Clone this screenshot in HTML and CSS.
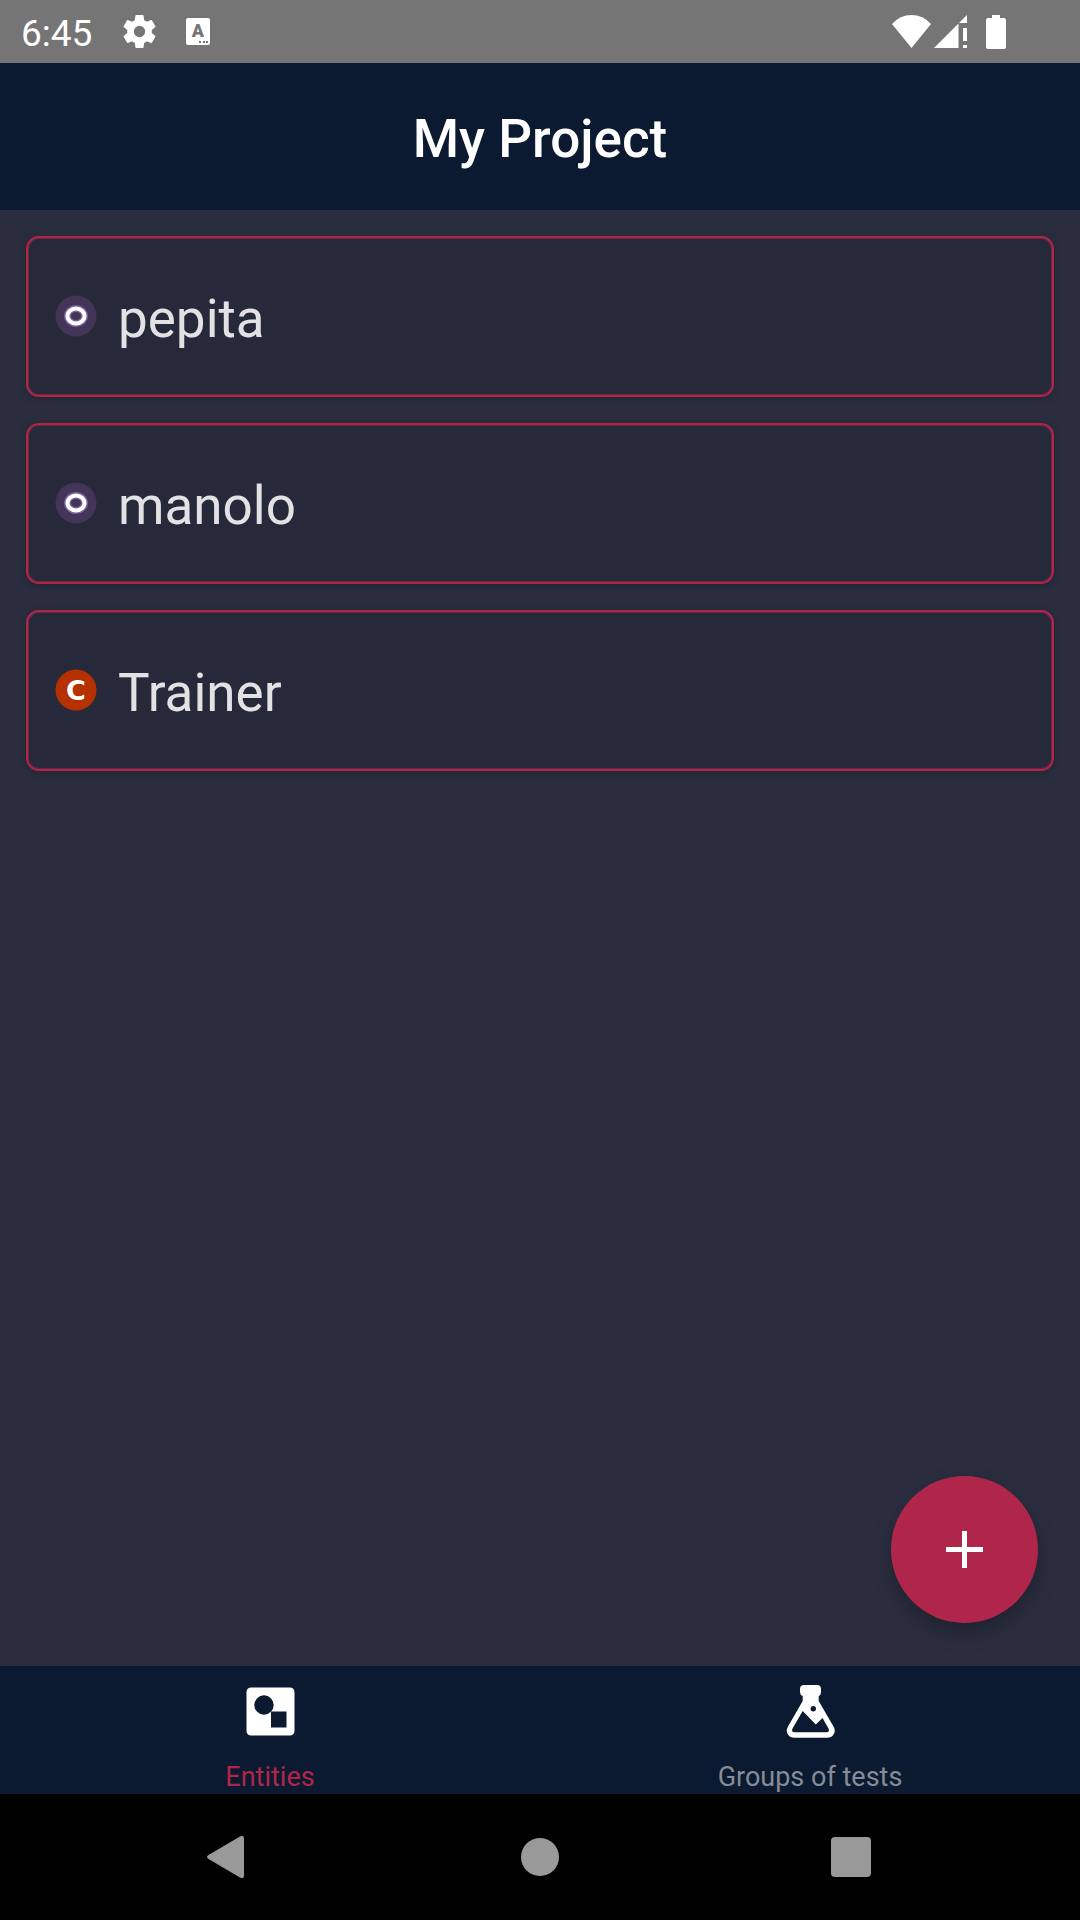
FILE: index.html
```html
<!DOCTYPE html>
<html lang="en">
<head>
  <meta charset="utf-8">
  <meta name="viewport" content="width=device-width, initial-scale=1">
  <title>My Project</title>
  <link rel="stylesheet" href="styles.css">
</head>
<body>
  <div class="status-bar">
    <span class="clock">6:45</span>
    <div class="notifications">
      <svg class="gear" viewBox="0 0 24 24" aria-hidden="true"><path d="M19.14 12.94c.04-.3.06-.61.06-.94 0-.32-.02-.64-.07-.94l2.03-1.58c.18-.14.23-.41.12-.61l-1.92-3.32c-.12-.22-.37-.29-.59-.22l-2.39.96c-.5-.38-1.03-.7-1.62-.94l-.36-2.54c-.04-.24-.24-.41-.48-.41h-3.84c-.24 0-.43.17-.47.41l-.36 2.54c-.59.24-1.13.57-1.62.94l-2.39-.96c-.22-.08-.47 0-.59.22L2.74 8.87c-.12.21-.08.47.12.61l2.03 1.58c-.05.3-.09.63-.09.94s.02.64.07.94l-2.03 1.58c-.18.14-.23.41-.12.61l1.92 3.32c.12.22.37.29.59.22l2.39-.96c.5.38 1.03.7 1.62.94l.36 2.54c.05.24.24.41.48.41h3.84c.24 0 .44-.17.47-.41l.36-2.54c.59-.24 1.13-.56 1.62-.94l2.39.96c.22.08.47 0 .59-.22l1.92-3.32c.12-.22.07-.47-.12-.61l-2.01-1.58zM12 15.3a3.3 3.3 0 1 1 0-6.6 3.3 3.3 0 0 1 0 6.6z"/></svg>
      <svg class="keyboard" viewBox="0 0 24 27" aria-hidden="true">
        <rect width="24" height="27" rx="2"/>
        <text class="cutout" x="12" y="19" text-anchor="middle">A</text>
        <g class="cutout"><rect x="13" y="23" width="2" height="2"/><rect x="17" y="23" width="2" height="2"/><rect x="20" y="23" width="2" height="2"/></g>
      </svg>
    </div>
    <div class="system-icons">
      <svg class="wifi" viewBox="0 0 39 33" aria-hidden="true"><path d="M19.500 33 0 9Q8 0 19.500 0T39 9z"/></svg>
      <svg class="signal" viewBox="0 0 33 33" aria-hidden="true"><path d="M0 33 24.500 8.500V33zM25 8l8-8v8zM29 13h4v13h-4zM29 30h4v3h-4z"/></svg>
      <svg class="battery" viewBox="0 0 20 34" aria-hidden="true"><path d="M6 0h8v3h4q2 0 2 2v27q0 2-2 2H2q-2 0-2-2V5q0-2 2-2h4z"/></svg>
    </div>
  </div>

  <header class="app-header"><h1>My Project</h1></header>

  <main class="content">
    <ul class="entity-list">
      <li class="entity">
        <svg class="badge badge-object" viewBox="0 0 42 42" aria-hidden="true"><circle cx="21" cy="21" r="20.500"/><ellipse class="glow" cx="21" cy="21" rx="8.500" ry="7.500"/><ellipse class="ring" cx="21" cy="21" rx="8.500" ry="7.500"/></svg>
        <span class="entity-name">pepita</span>
      </li>
      <li class="entity">
        <svg class="badge badge-object" viewBox="0 0 42 42" aria-hidden="true"><circle cx="21" cy="21" r="20.500"/><ellipse class="glow" cx="21" cy="21" rx="8.500" ry="7.500"/><ellipse class="ring" cx="21" cy="21" rx="8.500" ry="7.500"/></svg>
        <span class="entity-name">manolo</span>
      </li>
      <li class="entity">
        <svg class="badge badge-class" viewBox="0 0 42 42" aria-hidden="true"><circle cx="21" cy="21" r="20.500"/><text x="21" y="31" text-anchor="middle">C</text></svg>
        <span class="entity-name">Trainer</span>
      </li>
    </ul>
    <button class="fab" type="button" aria-label="Add entity">
      <svg viewBox="0 0 37 37" aria-hidden="true"><path d="M16 0h5v16h16v5H21v16h-5V21H0v-5h16z"/></svg>
    </button>
  </main>

  <nav class="tabs">
    <a class="tab tab-active" href="#entities">
      <svg viewBox="0 0 64 64" aria-hidden="true"><path fill-rule="evenodd" d="M13.500 8.500h38q5 0 5 5v38q0 5-5 5h-38q-5 0-5-5v-38q0-5 5-5zM26 16.300a9.700 9.700 0 1 0 0 19.400a9.700 9.700 0 1 0 0-19.400z"/><path class="hole" d="M33 32.500h15.500v16H33z"/></svg>
      <span>Entities</span>
    </a>
    <a class="tab" href="#tests">
      <svg viewBox="0 0 64 64" aria-hidden="true"><path fill-rule="evenodd" d="M26 6h13q4 0 4 4v3q0 3-2.300 4v5L55.500 47.500Q58 52 55.500 55.500 53.500 58.700 49 58.700H16.500Q12 58.700 10 55.500 7.500 52 10 47.500L24.700 22v-5Q22 16 22 13v-3q0-4 4-4zM24.700 32 14.500 49.500Q13 53.300 16.500 53.300h32Q52 53.300 50.500 49.500L44.500 39l-6.700 6.500zM35.300 27a2.700 2.700 0 1 0 0 5.400a2.700 2.700 0 1 0 0-5.400z"/></svg>
      <span>Groups of tests</span>
    </a>
  </nav>

  <div class="system-nav">
    <button type="button" aria-label="Back"><svg viewBox="0 0 64 64" aria-hidden="true"><path d="M11.500 30 43 11.500q4-2 4 2v37q0 4-4 2L11.500 34q-3-2 0-4z"/></svg></button>
    <button type="button" aria-label="Home"><svg viewBox="0 0 64 64" aria-hidden="true"><circle cx="32" cy="32" r="19"/></svg></button>
    <button type="button" aria-label="Recent apps"><svg viewBox="0 0 64 64" aria-hidden="true"><rect x="12" y="12" width="40" height="40" rx="4"/></svg></button>
  </div>
</body>
</html>
```
FILE: styles.css
```css
:root {
  --navy: #0b1a30;
  --crimson: #b0264b;
  --page: #2a2d3e;
  --card: #262939;
  --status: #757575;
}

* {
  box-sizing: border-box;
}

body {
  margin: 0;
  min-height: 100vh;
  display: flex;
  flex-direction: column;
  background: var(--page);
  color: #fff;
  font-family: Roboto, sans-serif;
}

svg {
  display: block;
  flex: none;
  fill: currentColor;
}

button {
  border: 0;
  padding: 0;
  cursor: pointer;
}

.status-bar {
  display: flex;
  align-items: center;
  height: 63px;
  padding: 0 74px 0 21px;
  background: var(--status);
}

.clock {
  font-size: 37px;
  line-height: 44px;
  padding-top: 4px;
}

.notifications {
  display: flex;
  align-items: center;
  gap: 26px;
  margin-left: 27px;
}

.gear {
  width: 41px;
  height: 41px;
}

.keyboard {
  width: 24px;
  height: 27px;
}

.keyboard text {
  font-size: 18px;
  font-weight: 900;
}

.cutout {
  fill: var(--status);
}

.system-icons {
  display: flex;
  align-items: center;
  margin-left: auto;
}

.wifi {
  width: 39px;
  height: 33px;
}

.signal {
  width: 33px;
  height: 33px;
  margin-left: 3px;
}

.battery {
  width: 20px;
  height: 34px;
  margin-left: 19px;
}

.app-header {
  display: flex;
  align-items: center;
  justify-content: center;
  height: 147px;
  padding-top: 4px;
  background: var(--navy);
}

.app-header h1 {
  margin: 0;
  font-size: 53px;
  line-height: 62px;
  font-weight: 500;
}

.content {
  flex: 1;
  position: relative;
  padding: 26px;
}

.entity-list {
  display: grid;
  gap: 26px;
  margin: 0;
  padding: 0;
  list-style: none;
}

.entity {
  display: flex;
  align-items: center;
  gap: 21px;
  height: 161px;
  padding: 0 27px;
  border: 2px solid var(--crimson);
  border-radius: 13px;
  background: var(--card);
  box-shadow: inset 0 0 0 1px rgba(176, 38, 75, 0.5), 0 2px 8px rgba(0, 0, 0, 0.2);
}

.entity-name {
  padding-top: 4px;
  color: #e2e2e4;
  font-size: 53px;
  line-height: 62px;
}

.badge {
  width: 42px;
  height: 42px;
  margin-bottom: 2px;
}

.badge text {
  fill: #fff;
  font-family: "DejaVu Sans", sans-serif;
  font-size: 27px;
  font-weight: 700;
}

.badge-object circle {
  fill: #433458;
}

.badge-object ellipse {
  fill: none;
}

.badge-object .glow {
  stroke: #77629a;
  stroke-width: 7px;
}

.badge-object .ring {
  stroke: #fff;
  stroke-width: 4px;
}

.badge-class circle {
  fill: #b53100;
}

.fab {
  position: absolute;
  right: 42px;
  bottom: 43px;
  display: grid;
  place-items: center;
  width: 147px;
  height: 147px;
  border-radius: 50%;
  background: var(--crimson);
  color: #fff;
  box-shadow: 0 10px 20px rgba(0, 0, 0, 0.25);
}

.fab svg {
  width: 37px;
  height: 37px;
}

.tabs {
  display: grid;
  grid-template-columns: 1fr 1fr;
  background: var(--navy);
}

.tab {
  display: flex;
  flex-direction: column;
  align-items: center;
  gap: 18px;
  padding: 13px 0 1px;
  color: #fff;
  text-decoration: none;
}

.tab svg {
  width: 64px;
  height: 64px;
}

.tab .hole {
  fill: var(--navy);
}

.tab span {
  color: #858c97;
  font-size: 27px;
  line-height: 32px;
}

.tab-active span {
  color: var(--crimson);
}

.system-nav {
  display: flex;
  align-items: center;
  justify-content: center;
  height: 126px;
  background: #000;
}

.system-nav button {
  display: grid;
  place-items: center;
  width: 311px;
  height: 126px;
  background: transparent;
  color: #999;
}

.system-nav svg {
  width: 64px;
  height: 64px;
}
```
